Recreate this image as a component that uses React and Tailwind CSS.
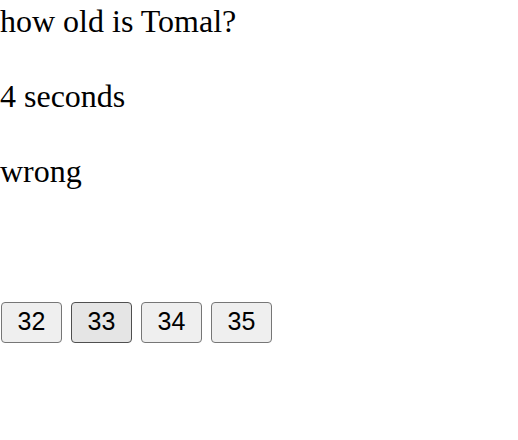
export default function App() {
  const opts = ["32", "33", "34", "35"];
  return (
    <div className="w-[518px] h-[440px] bg-white text-black">
      <div className="flex flex-col gap-[32px] font-['Liberation_Serif',serif] text-[32px] leading-[43px]">
        <div>how old is Tomal?</div>
        <div>4 seconds</div>
        <div>wrong</div>
      </div>
      <div className="mt-[109px] ml-[1px] flex gap-[9px]">
        {opts.map((o) => (
          <button
            key={o}
            className={
              o === "33"
                ? "w-[61px] h-[41px] pb-[2px] rounded-[4px] border border-[#4f4f4f] bg-[#e5e5e5] font-['Liberation_Sans',sans-serif] text-[25px] leading-none text-black"
                : "w-[61px] h-[41px] pb-[2px] rounded-[4px] border border-[#767676] bg-[#efefef] font-['Liberation_Sans',sans-serif] text-[25px] leading-none text-black"
            }
          >
            {o}
          </button>
        ))}
      </div>
    </div>
  );
}
